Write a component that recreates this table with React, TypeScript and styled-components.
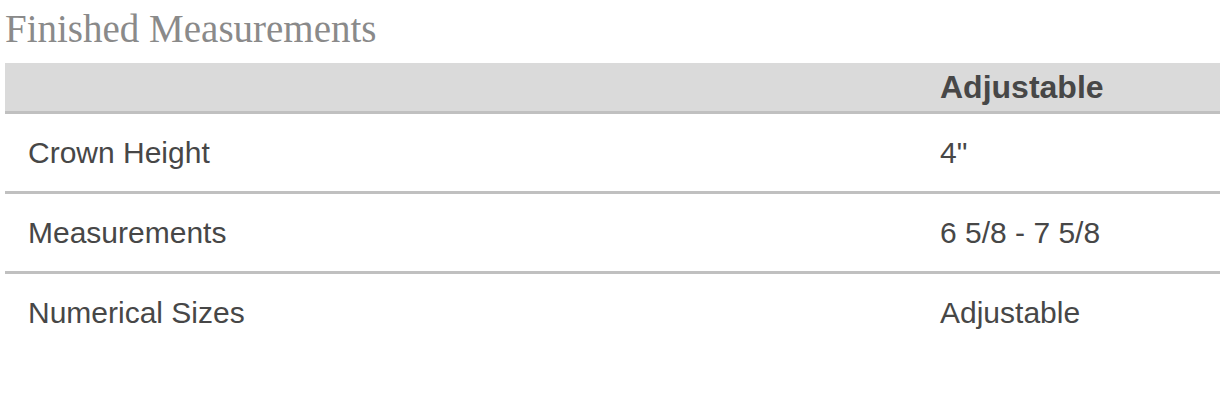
import React from "react";
import styled, { createGlobalStyle } from "styled-components";

const Global = createGlobalStyle`
  html, body { margin: 0; padding: 0; background: #ffffff; }
`;

const Page = styled.div`
  padding-left: 5px;
`;

const Title = styled.h2`
  margin: 0 0 5px 0;
  font-family: "Liberation Serif", "Times New Roman", serif;
  font-weight: normal;
  font-size: 39px;
  line-height: 58px;
  color: #8a8a8a;
`;

const Table = styled.div`
  display: grid;
  grid-template-columns: 912px 1fr;
  font-family: "Liberation Sans", Arial, sans-serif;
  color: #474747;
`;

const Cell = styled.div<{ $head?: boolean; $last?: boolean }>`
  display: flex;
  align-items: center;
  padding-left: 23px;
  height: ${(p) => (p.$head ? "48px" : "77px")};
  background: ${(p) => (p.$head ? "#dadada" : "transparent")};
  border-bottom: ${(p) => (p.$last ? "none" : "3px solid #c0c0c0")};
  font-size: ${(p) => (p.$head ? "32px" : "30px")};
  font-weight: ${(p) => (p.$head ? "bold" : "normal")};
`;

const rows = [
  ["Crown Height", '4"'],
  ["Measurements", "6 5/8 - 7 5/8"],
  ["Numerical Sizes", "Adjustable"],
];

export default function App() {
  return (
    <Page>
      <Global />
      <Title>Finished Measurements</Title>
      <Table>
        <Cell $head />
        <Cell $head>Adjustable</Cell>
        {rows.map(([k, v], i) => (
          <React.Fragment key={k}>
            <Cell $last={i === rows.length - 1}>{k}</Cell>
            <Cell $last={i === rows.length - 1}>{v}</Cell>
          </React.Fragment>
        ))}
      </Table>
    </Page>
  );
}
